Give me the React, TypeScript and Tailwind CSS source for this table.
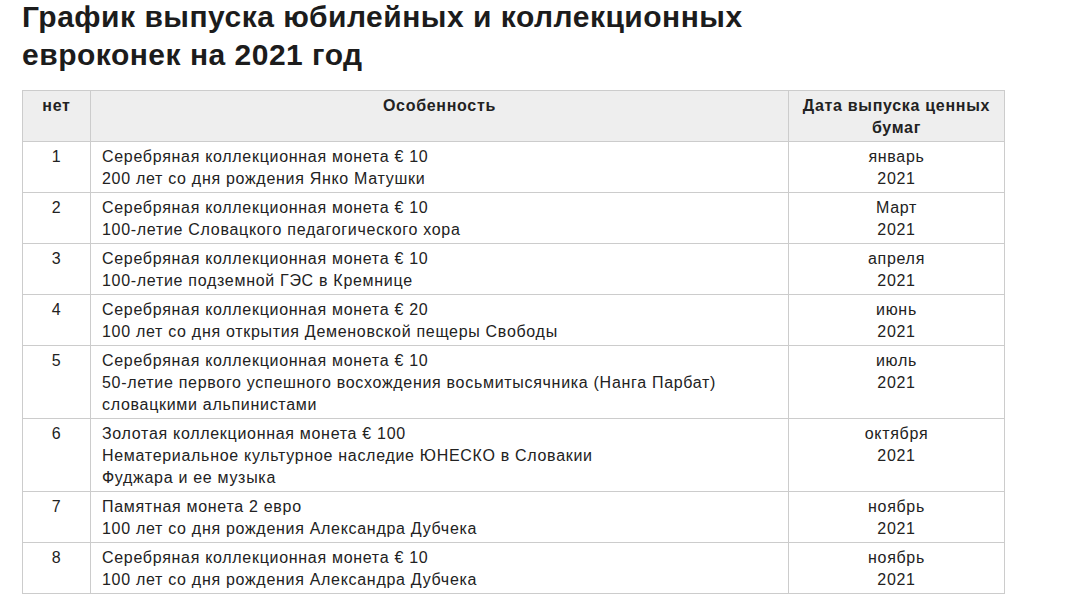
const rows: { n: number; lines: string[]; month: string }[] = [
  { n: 1, lines: ["Серебряная коллекционная монета € 10", "200 лет со дня рождения Янко Матушки"], month: "январь" },
  { n: 2, lines: ["Серебряная коллекционная монета € 10", "100-летие Словацкого педагогического хора"], month: "Март" },
  { n: 3, lines: ["Серебряная коллекционная монета € 10", "100-летие подземной ГЭС в Кремнице"], month: "апреля" },
  { n: 4, lines: ["Серебряная коллекционная монета € 20", "100 лет со дня открытия Деменовской пещеры Свободы"], month: "июнь" },
  {
    n: 5,
    lines: [
      "Серебряная коллекционная монета € 10",
      "50-летие первого успешного восхождения восьмитысячника (Нанга Парбат)",
      "словацкими альпинистами",
    ],
    month: "июль",
  },
  {
    n: 6,
    lines: [
      "Золотая коллекционная монета € 100",
      "Нематериальное культурное наследие ЮНЕСКО в Словакии",
      "Фуджара и ее музыка",
    ],
    month: "октября",
  },
  { n: 7, lines: ["Памятная монета 2 евро", "100 лет со дня рождения Александра Дубчека"], month: "ноябрь" },
  { n: 8, lines: ["Серебряная коллекционная монета € 10", "100 лет со дня рождения Александра Дубчека"], month: "ноябрь" },
];

export default function App() {
  return (
    <div className="min-h-screen bg-white px-[22px] font-['Liberation_Sans',Arial,sans-serif] text-[#222]">
      <h1 className="-mt-[2px] text-[30px] font-bold leading-[38px] tracking-[0.5px] text-[#1c1c1c]">
        График выпуска юбилейных и коллекционных
        <br />
        евроконек на 2021 год
      </h1>

      <table className="mt-[16px] w-[983px] border-collapse text-[16px] leading-[22px] tracking-[0.7px]">
        <thead>
          <tr className="bg-[#eeeeee]">
            <th className="w-[68px] border border-[#cccccc] px-[8px] pt-[4px] pb-[2px] align-top font-bold">нет</th>
            <th className="w-[698px] border border-[#cccccc] px-[10px] pt-[4px] pb-[2px] align-top font-bold">Особенность</th>
            <th className="border border-[#cccccc] px-[4px] pt-[4px] pb-[2px] align-top font-bold">
              Дата выпуска ценных
              <br />
              бумаг
            </th>
          </tr>
        </thead>
        <tbody>
          {rows.map((r) => (
            <tr key={r.n}>
              <td className="border border-[#cccccc] px-[8px] pt-[4px] pb-[2px] text-center align-top">{r.n}</td>
              <td className="border border-[#cccccc] px-[11px] pt-[4px] pb-[2px] text-left align-top">
                {r.lines.map((l, i) => (
                  <div key={i}>{l}</div>
                ))}
              </td>
              <td className="border border-[#cccccc] px-[8px] pt-[4px] pb-[2px] text-center align-top">
                <div>{r.month}</div>
                <div>2021</div>
              </td>
            </tr>
          ))}
        </tbody>
      </table>
    </div>
  );
}
